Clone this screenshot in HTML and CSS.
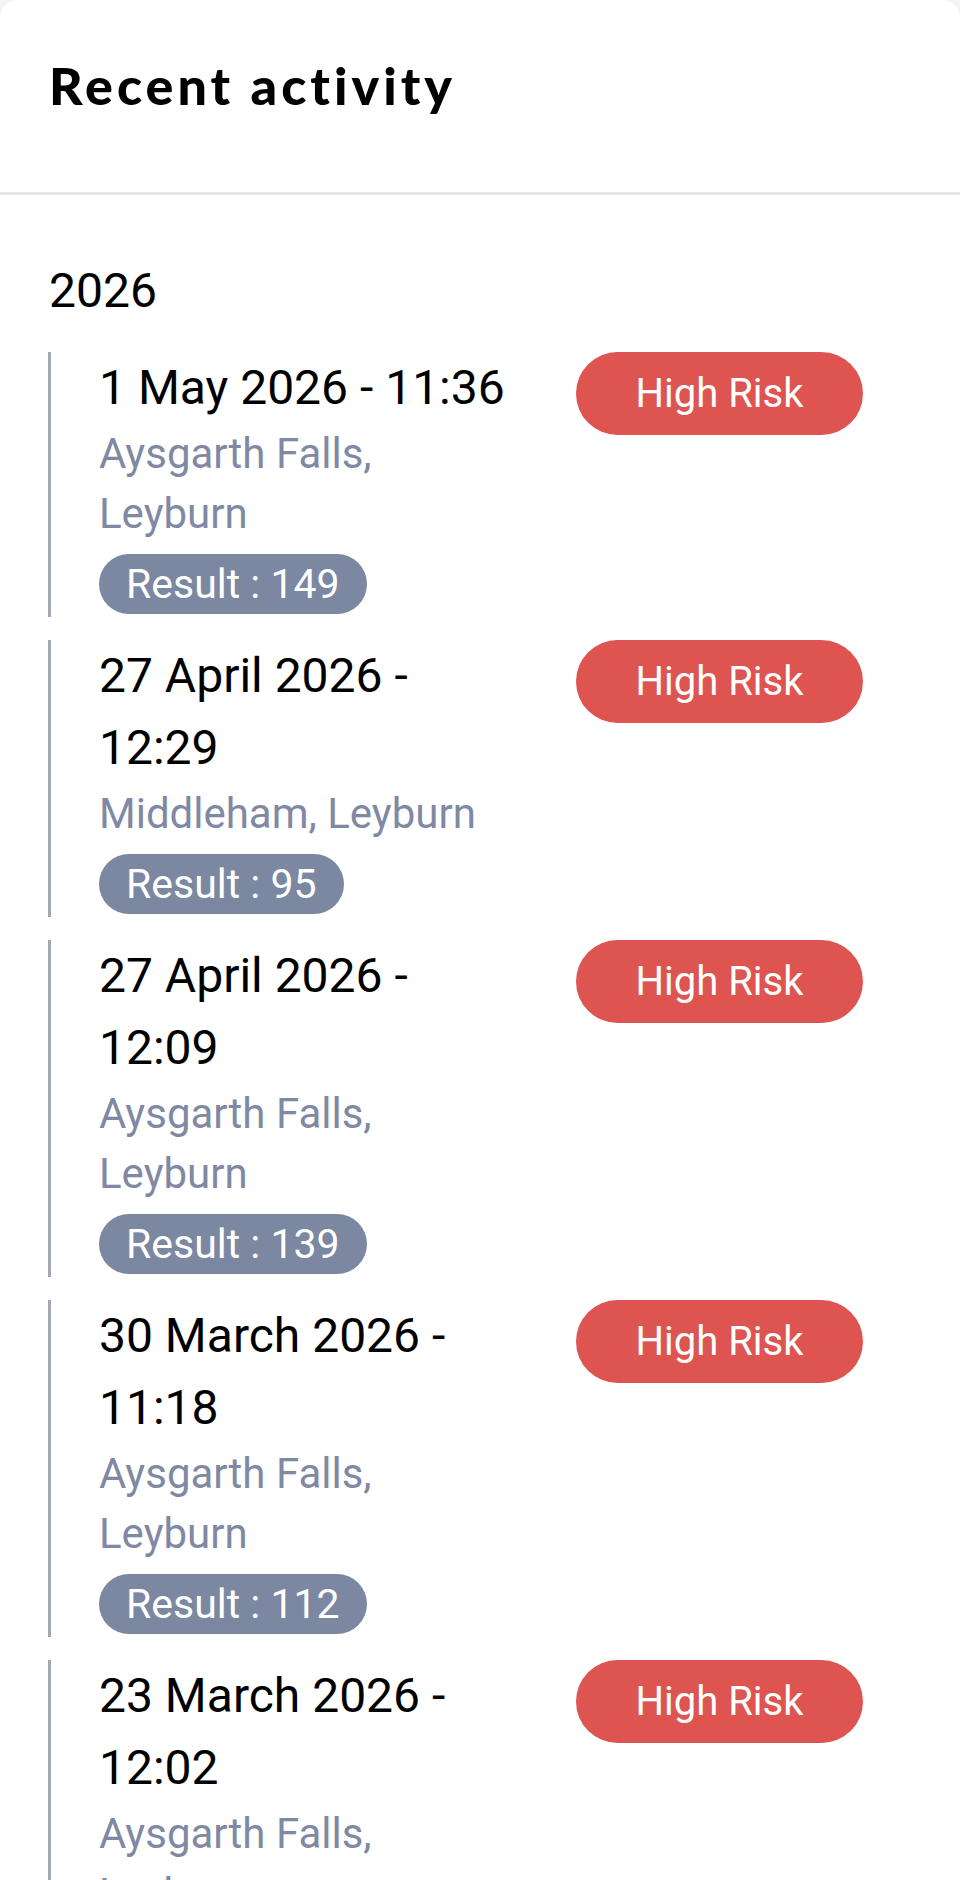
FILE: index.html
```html
<!DOCTYPE html>
<html lang="en">
<head>
    <meta charset="UTF-8">
    <meta name="viewport" content="width=device-width, initial-scale=1.0">
    <link rel="stylesheet" href="styles.css">
</head>
<body>
    <div class="card">
        <div class="card-header">
            <h1>Recent activity</h1>
        </div>

        <div class="card-body">
            <div class="year">2026</div>

            <div class="entry">
                <div class="entry-info">
                    <div class="entry-date">1 May 2026 - 11:36</div>
                    <div class="entry-place">Aysgarth Falls, Leyburn</div>
                    <span class="result">Result : 149</span>
                </div>
                <span class="risk">High Risk</span>
            </div>

            <div class="entry">
                <div class="entry-info">
                    <div class="entry-date">27 April 2026 - 12:29</div>
                    <div class="entry-place">Middleham, Leyburn</div>
                    <span class="result">Result : 95</span>
                </div>
                <span class="risk">High Risk</span>
            </div>

            <div class="entry">
                <div class="entry-info">
                    <div class="entry-date">27 April 2026 - 12:09</div>
                    <div class="entry-place">Aysgarth Falls, Leyburn</div>
                    <span class="result">Result : 139</span>
                </div>
                <span class="risk">High Risk</span>
            </div>

            <div class="entry">
                <div class="entry-info">
                    <div class="entry-date">30 March 2026 - 11:18</div>
                    <div class="entry-place">Aysgarth Falls, Leyburn</div>
                    <span class="result">Result : 112</span>
                </div>
                <span class="risk">High Risk</span>
            </div>

            <div class="entry">
                <div class="entry-info">
                    <div class="entry-date">23 March 2026 - 12:02</div>
                    <div class="entry-place">Aysgarth Falls, Leyburn</div>
                    <span class="result">Result : 104</span>
                </div>
                <span class="risk">High Risk</span>
            </div>
        </div>
    </div>
</body>
</html>
```

FILE: styles.css
```css
body {
    margin: 0;
    background-color: #f3f3f5;
    font-family: Roboto, "Liberation Sans", Arial, sans-serif;
    color: #000;
}
.card {
    background-color: white;
    border-radius: 18px 18px 0 0;
    min-height: 1880px;
}
.card-header {
    height: 195px;
    box-sizing: border-box;
    padding: 54px 49px 0;
    border-bottom: 3px solid #e5e5ea;
}
h1 {
    margin: 0;
    font-family: Lato, "Noto Sans", sans-serif;
    font-weight: 900;
    font-size: 52px;
    line-height: 62px;
    letter-spacing: 4px;
    color: #000;
}
.card-body {
    padding: 60px 49px 0 48px;
}
.year {
    font-size: 48px;
    line-height: 72px;
    margin-bottom: 25px;
    padding-left: 1px;
}
.entry {
    display: flex;
    align-items: flex-start;
    border-left: 3px solid #a3a6b4;
    padding: 0 0 3px 48px;
    margin-bottom: 23px;
}
.entry-info {
    width: 416px;
    flex-shrink: 0;
}
.entry-date {
    font-size: 48px;
    line-height: 72px;
}
.entry-place {
    font-size: 42px;
    line-height: 60px;
    color: #7f89a3;
    margin-bottom: 10px;
}
.result {
    display: inline-block;
    height: 60px;
    line-height: 60px;
    padding: 0 27px;
    border-radius: 30px;
    background-color: #7c87a1;
    color: white;
    font-size: 41px;
}
.risk {
    margin-left: 61px;
    width: 287px;
    height: 83px;
    line-height: 83px;
    border-radius: 42px;
    background-color: #dd5451;
    color: white;
    font-size: 40px;
    text-align: center;
}
```
